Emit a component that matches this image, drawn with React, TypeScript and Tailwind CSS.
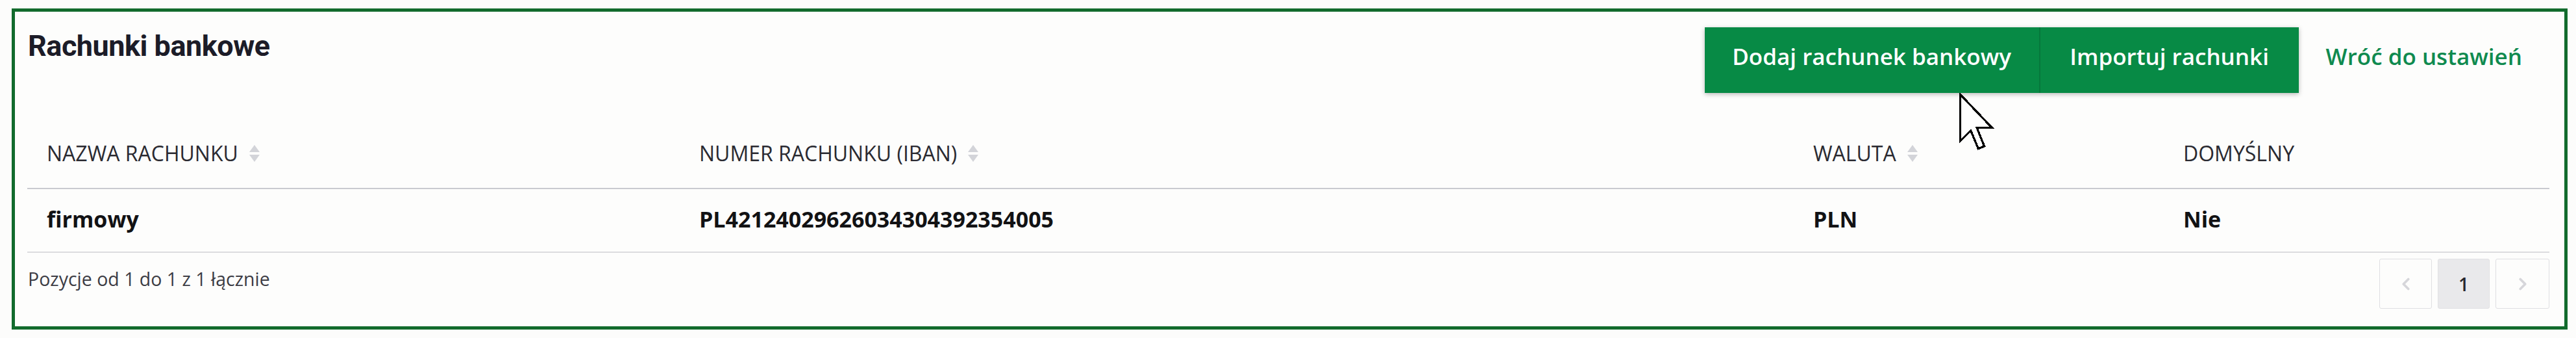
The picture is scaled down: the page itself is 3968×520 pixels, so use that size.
import React from 'react';
import { ChevronLeft, ChevronRight } from 'lucide-react';

const columns = 'grid grid-cols-[1005px_1716px_570px_1fr]';

const SortIcon = () => (
  <svg width="20" height="30" viewBox="0 0 20 30" className="ml-[15px] shrink-0">
    <polygon points="10,2 18,13 2,13" fill="#d3d4d9" />
    <polygon points="2,17 18,17 10,28" fill="#d3d4d9" />
  </svg>
);

const HeaderCell: React.FC<{ label: string; sortable?: boolean }> = ({ label, sortable = true }) => (
  <div className="flex items-center pl-[30px] pt-[77px] pb-[37px]">
    <span className="text-[32px] leading-none font-medium uppercase text-[#2a2a31]">{label}</span>
    {sortable && <SortIcon />}
  </div>
);

const BodyCell: React.FC<{ children: React.ReactNode }> = ({ children }) => (
  <div className="pl-[30px] pt-[29px] pb-[33px] text-[34px] leading-none font-bold text-[#121214]">{children}</div>
);

// mouse pointer captured in the screenshot
const Cursor = () => (
  <svg
    width="58"
    height="88"
    viewBox="0 0 12 19"
    className="absolute left-[3016px] top-[143px]"
    shapeRendering="crispEdges"
  >
    <path d="M0.5 0.5 L0.5 16 L4 12.5 L6.5 18.5 L8.5 17.7 L6 11.5 L11 11.5 Z" fill="#ffffff" stroke="#000000" strokeWidth="0.7" strokeLinejoin="miter" />
  </svg>
);

export default function App() {
  return (
    <div
      className="relative h-[520px] w-[3968px] bg-[#fcfcfb] pl-[18px] pr-[13px] pt-[13px]"
      style={{ fontFamily: '"Open Sans", "Noto Sans", sans-serif' }}
    >
      <div className="h-[494px] border-[5px] border-[#126b2d] bg-[#fdfdfc] pl-[19px] pr-[23px]">
        {/* Title + actions */}
        <div className="flex items-start justify-between pt-[24px]">
          <h1
            className="ml-[1px] mt-[6px] text-[45px] leading-none font-bold tracking-[-0.5px] text-[#1c1c28]"
            style={{ fontFamily: 'Roboto, "Liberation Sans", sans-serif' }}
          >
            Rachunki bankowe
          </h1>
          <div className="flex items-start">
            <div className="flex shadow-[0_2px_7px_rgba(0,0,0,0.28)]">
              <button className="flex h-[101px] w-[515px] justify-center bg-[#078a45] pt-[27px] text-[35px] leading-none font-semibold text-white">
                Dodaj rachunek bankowy
              </button>
              <button className="flex h-[101px] w-[400px] justify-center border-l-2 border-[#06773b] bg-[#078a45] pt-[27px] text-[35px] leading-none font-semibold text-white">
                Importuj rachunki
              </button>
            </div>
            <a className="ml-[42px] mr-[42px] mt-[27px] text-[35px] leading-none font-semibold text-[#0f8a4f]">
              Wróć do ustawień
            </a>
          </div>
        </div>

        {/* Table */}
        <div className={`${columns} border-b-2 border-[#c9cad0]`}>
          <HeaderCell label="Nazwa rachunku" />
          <HeaderCell label="Numer rachunku (IBAN)" />
          <HeaderCell label="Waluta" />
          <HeaderCell label="Domyślny" sortable={false} />
        </div>
        <div className={`${columns} border-b-2 border-[#dcdcdf]`}>
          <BodyCell>firmowy</BodyCell>
          <BodyCell>PL42124029626034304392354005</BodyCell>
          <BodyCell>PLN</BodyCell>
          <BodyCell>Nie</BodyCell>
        </div>

        {/* Footer */}
        <div className="flex items-start justify-between pt-[9px]">
          <span className="ml-[1px] mt-[17px] text-[28.5px] leading-none text-[#3c3c44]">
            Pozycje od 1 do 1 z 1 łącznie
          </span>
          <div className="flex gap-[9px]">
            <div className="flex h-[77px] w-[81px] items-center justify-center rounded-[3px] border border-[#dfdfe2]">
              <ChevronLeft size={30} strokeWidth={3} color="#d6d6da" />
            </div>
            <div className="flex h-[77px] w-[80px] items-center justify-center rounded-[3px] border border-[#e2e2e4] bg-[#e9e9eb] text-[28px] font-semibold text-[#26262c]">
              1
            </div>
            <div className="flex h-[77px] w-[83px] items-center justify-center rounded-[3px] border border-[#dfdfe2]">
              <ChevronRight size={30} strokeWidth={3} color="#d6d6da" />
            </div>
          </div>
        </div>
      </div>
      <Cursor />
    </div>
  );
}
